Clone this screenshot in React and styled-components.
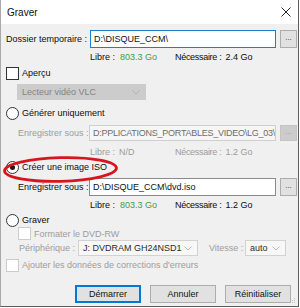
import React from "react";
import styled, { createGlobalStyle } from "styled-components";

const GlobalStyle = createGlobalStyle`
  html, body {
    margin: 0;
    padding: 0;
    background: #ffffff;
  }
  * {
    box-sizing: border-box;
  }
`;

const FONT = `"Liberation Sans", Arial, sans-serif`;

// Fenêtre
const Window = styled.div`
  position: relative;
  width: 299px;
  height: 307px;
  background: #f0f0f0;
  border-left: 1px solid #a9a9a9;
  border-right: 1px solid #5c5c5c;
  border-bottom: 1px solid #5c5c5c;
  font-family: ${FONT};
  font-size: 9px;
  color: #0d0d0d;
  display: flex;
  flex-direction: column;
  overflow: hidden;
`;

const TitleBar = styled.div`
  height: 24px;
  flex: none;
  background: #ffffff;
  display: flex;
  align-items: center;
  justify-content: space-between;
  padding: 0 7px 0 6px;
  font-size: 10px;
  color: #111;
`;

const Body = styled.div`
  flex: 1;
  display: flex;
  flex-direction: column;
  padding: 6px 0 0 5px;
`;

const Row = styled.div`
  display: flex;
  align-items: center;
  height: ${(p) => p.$h || 14}px;
  margin-top: ${(p) => p.$mt || 0}px;
  padding-left: ${(p) => p.$pl || 0}px;
  flex: none;
`;

const Label = styled.span`
  width: ${(p) => (p.$w ? `${p.$w}px` : "auto")};
  margin-left: ${(p) => p.$ml || 0}px;
  flex: none;
  white-space: nowrap;
  color: ${(p) => (p.$disabled ? "#9c9c9c" : "#0d0d0d")};
`;

const TextInput = styled.input`
  width: ${(p) => p.$w}px;
  height: ${(p) => p.$h || 18}px;
  flex: none;
  border: 1px solid ${(p) => (p.$focus ? "#1a7fd0" : p.disabled ? "#cfcfcf" : "#8a8a8a")};
  background: ${(p) => (p.disabled ? "#f6f6f6" : "#ffffff")};
  color: ${(p) => (p.disabled ? "#6d6d6d" : "#111")};
  font-family: ${FONT};
  font-size: 9px;
  letter-spacing: ${(p) => (p.$tight ? "-0.25px" : "0")};
  padding: 0 0 0 3px;
  margin: 0;
  outline: none;
`;

const SmallButton = styled.div`
  width: 17px;
  height: ${(p) => p.$h || 18}px;
  margin-left: 4px;
  flex: none;
  display: flex;
  align-items: center;
  justify-content: center;
  border: 1px solid ${(p) => (p.$disabled ? "#c4c4c4" : "#adadad")};
  background: ${(p) => (p.$disabled ? "#cccccc" : "#e1e1e1")};
  color: ${(p) => (p.$disabled ? "#9a9a9a" : "#333")};
  font-size: 8px;
  line-height: 1;
  padding-bottom: 2px;
`;

const Info = styled.div`
  display: flex;
  align-items: center;
  color: ${(p) => (p.$disabled ? "#9c9c9c" : "#0d0d0d")};
  white-space: nowrap;
`;

const InfoCell = styled.span`
  width: ${(p) => p.$w}px;
  flex: none;
`;

const Need = styled.span`
  letter-spacing: -0.3px;
`;

const Green = styled.span`
  color: #3f9e3f;
  margin-left: 5px;
`;

const Value = styled.span`
  margin-left: 4px;
`;

const Box = styled.span`
  width: 13px;
  height: 13px;
  flex: none;
  background: #fff;
  border: 1px solid ${(p) => (p.$disabled ? "#cccccc" : "#333333")};
  margin-right: 3px;
`;

const Radio = styled.span`
  width: 13px;
  height: 13px;
  flex: none;
  border-radius: 50%;
  background: #fff;
  border: 1px solid #333333;
  margin-right: 3px;
  display: flex;
  align-items: center;
  justify-content: center;

  &::after {
    content: "";
    width: 5px;
    height: 5px;
    border-radius: 50%;
    background: #1a1a1a;
    display: ${(p) => (p.$checked ? "block" : "none")};
  }
`;

const Select = styled.div`
  width: ${(p) => p.$w}px;
  height: 16px;
  flex: none;
  display: flex;
  align-items: center;
  justify-content: space-between;
  padding: 0 5px 0 4px;
  background: ${(p) => (p.$grey ? "#cccccc" : "#f7f7f7")};
  border: 1px solid ${(p) => (p.$grey ? "#cccccc" : "#d2d2d2")};
  color: ${(p) => (p.$grey ? "#838383" : "#2a2a2a")};
  white-space: nowrap;
`;

const Footer = styled.div`
  display: flex;
  justify-content: flex-end;
  gap: 9px;
  margin-top: 13px;
  padding-right: 7px;
`;

const Button = styled.div`
  width: 66px;
  height: 18px;
  display: flex;
  align-items: center;
  justify-content: center;
  background: #e1e1e1;
  border: 1px solid ${(p) => (p.$primary ? "#0078d7" : "#adadad")};
  box-shadow: ${(p) => (p.$primary ? "inset 0 0 0 1px #0078d7" : "none")};
  color: #111;
`;

const Annotation = styled.svg`
  position: absolute;
  left: 1px;
  top: 156px;
  pointer-events: none;
`;

const Grip = styled.svg`
  position: absolute;
  right: 2px;
  bottom: 2px;
`;

const Chevron = ({ color = "#a8a8a8" }) => (
  <svg width="8" height="5" viewBox="0 0 8 5">
    <path d="M0.5 0.5 L4 4 L7.5 0.5" fill="none" stroke={color} strokeWidth="1" />
  </svg>
);

const CloseIcon = () => (
  <svg width="10" height="10" viewBox="0 0 10 10">
    <path d="M0.5 0.5 L9.5 9.5 M9.5 0.5 L0.5 9.5" stroke="#222" strokeWidth="1" />
  </svg>
);

export default function App() {
  return (
    <>
      <GlobalStyle />
      <Window>
        <TitleBar>
          <span>Graver</span>
          <CloseIcon />
        </TitleBar>

        <Body>
          <Row $h={18}>
            <Label $w={84}>Dossier temporaire :</Label>
            <TextInput $w={186} $focus readOnly value="D:\DISQUE_CCM\" />
            <SmallButton>...</SmallButton>
          </Row>
          <Row $h={16} $mt={1} $pl={84}>
            <Info>
              <InfoCell $w={85}>Libre :<Green>803.3 Go</Green></InfoCell>
              <Need>Nécessaire :</Need><Value>2.4 Go</Value>
            </Info>
          </Row>

          <Row $h={14} $mt={1}>
            <Box />
            <Label>Aperçu</Label>
          </Row>
          <Row $h={16} $mt={4} $pl={11}>
            <Select $w={129} $grey>
              <span>Lecteur vidéo VLC</span>
              <Chevron color="#b0b0b0" />
            </Select>
          </Row>

          <Row $h={18} $mt={4}>
            <Radio />
            <Label>Générer uniquement</Label>
          </Row>
          <Row $h={16} $mt={3} $pl={12}>
            <Label $w={71} $disabled>Enregistrer sous :</Label>
            <TextInput $w={187} $h={16} $tight disabled readOnly value="D:PPLICATIONS_PORTABLES_VIDEO\LG_03\Di" />
            <SmallButton $disabled $h={16}>...</SmallButton>
          </Row>
          <Row $h={16} $mt={3} $pl={84}>
            <Info $disabled>
              <InfoCell $w={85}>Libre :<Value>N/D</Value></InfoCell>
              <Need>Nécessaire :</Need><Value>1.2 Go</Value>
            </Info>
          </Row>

          <Row $h={14}>
            <Radio $checked />
            <Label>Créer une image ISO</Label>
          </Row>
          <Row $h={18} $mt={4} $pl={12}>
            <Label $w={71}>Enregistrer sous :</Label>
            <TextInput $w={187} readOnly value="D:\DISQUE_CCM\dvd.iso" />
            <SmallButton>...</SmallButton>
          </Row>
          <Row $h={16} $mt={1} $pl={84}>
            <Info>
              <InfoCell $w={85}>Libre :<Green>803.3 Go</Green></InfoCell>
              <Need>Nécessaire :</Need><Value>1.2 Go</Value>
            </Info>
          </Row>

          <Row $h={14}>
            <Radio />
            <Label>Graver</Label>
          </Row>
          <Row $h={13} $pl={12}>
            <Box $disabled />
            <Label $disabled>Formater le DVD-RW</Label>
          </Row>
          <Row $h={16} $pl={13}>
            <Label $w={59} $disabled>Périphérique :</Label>
            <Select $w={120}>
              <span>J: DVDRAM GH24NSD1</span>
              <Chevron color="#b8b8b8" />
            </Select>
            <Label $w={36} $ml={11} $disabled>Vitesse :</Label>
            <Select $w={41}>
              <span>auto</span>
              <Chevron color="#b8b8b8" />
            </Select>
          </Row>
          <Row $h={14} $mt={2}>
            <Box $disabled />
            <Label $disabled>Ajouter les données de corrections d'erreurs</Label>
          </Row>

          <Footer>
            <Button $primary>Démarrer</Button>
            <Button>Annuler</Button>
            <Button>Réinitialiser</Button>
          </Footer>
        </Body>

        <Annotation width="120" height="28" viewBox="0 0 120 28">
          <ellipse cx="58.5" cy="13.5" rx="56" ry="11.8" fill="none" stroke="#d8141c" strokeWidth="2.8" transform="rotate(-1.5 58.5 13.5)" />
        </Annotation>

        <Grip width="8" height="8" viewBox="0 0 8 8">
          <rect x="6" y="2" width="1" height="1" fill="#bdbdbd" />
          <rect x="4" y="4" width="1" height="1" fill="#bdbdbd" />
          <rect x="6" y="4" width="1" height="1" fill="#bdbdbd" />
          <rect x="2" y="6" width="1" height="1" fill="#bdbdbd" />
          <rect x="4" y="6" width="1" height="1" fill="#bdbdbd" />
          <rect x="6" y="6" width="1" height="1" fill="#bdbdbd" />
        </Grip>
      </Window>
    </>
  );
}
